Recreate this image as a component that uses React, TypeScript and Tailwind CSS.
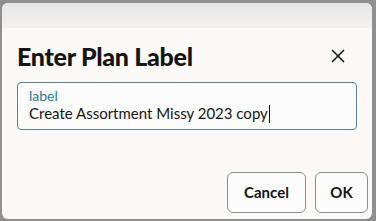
import { X } from 'lucide-react'

export default function App() {
    return (
        <div className="w-[376px] h-[221px] bg-[#8f8f8f] pt-[3px] pl-[2px] pr-[4px] pb-[2px] font-['Lato','Liberation_Sans',sans-serif] overflow-hidden">
            {/* Dialog */}
            <div className="h-full rounded-[6px] bg-[#faf9f8] overflow-hidden flex flex-col">
                {/* blurred header strip */}
                <div className="h-[25px] bg-[linear-gradient(180deg,#e6e6e6,#ececec_60%,#f2f1f0)]" />

                {/* Title row */}
                <div className="flex items-center justify-between pl-[15px] pr-[23px] mt-[13px]">
                    <h1 className="text-[25px] leading-[30px] font-black text-[#161513] tracking-[-0.3px]">Enter Plan Label</h1>
                    <X className="w-[22px] h-[22px] text-[#161513]" strokeWidth={1.8} />
                </div>

                {/* Input */}
                <div className="mx-[15px] mt-[11px] h-[48px] border border-[#5d7f8c] rounded-[4px] bg-[#fcfcfc] px-[11px] pt-[4px]">
                    <div className="text-[14px] leading-[17px] text-[#1e7b9a]">label</div>
                    <div className="text-[15px] leading-[19px] text-[#161513] flex items-center">
                        Create Assortment Missy 2023 copy
                        <span className="inline-block w-px h-[18px] bg-[#161513] ml-[1px]" />
                    </div>
                </div>

                {/* Actions */}
                <div className="flex justify-end gap-[9px] pr-[4px] mt-auto mb-[6px]">
                    <button className="w-[79px] h-[41px] rounded-[6px] border border-[#8c8c8c] bg-[#fcfcfc] text-[15px] font-bold text-[#161513]">Cancel</button>
                    <button className="w-[53px] h-[41px] rounded-[6px] border border-[#8c8c8c] bg-[#fcfcfc] text-[15px] font-bold text-[#161513]">OK</button>
                </div>
            </div>
        </div>
    )
}
